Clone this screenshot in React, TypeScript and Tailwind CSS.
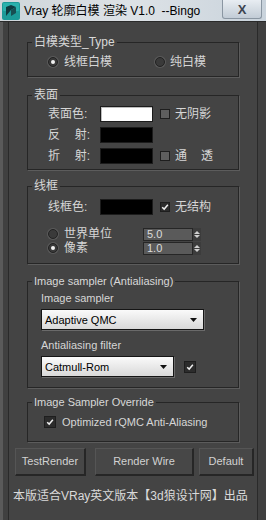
import React from 'react';

function Radio({ checked }: { checked?: boolean }) {
  return (
    <span className="flex h-[10px] w-[10px] shrink-0 items-center justify-center rounded-full border border-[#222] bg-[#3a3a3a] shadow-[0_0_0_1px_#5a5a5a]">
      {checked && <span className="h-[4px] w-[4px] rounded-full bg-[#f2f2f2]" />}
    </span>
  );
}

function Check({ checked, size = 9 }: { checked?: boolean; size?: number }) {
  return (
    <span
      className={`flex shrink-0 items-center justify-center border border-[#1e1e1e] ${
        checked ? 'bg-[#2c2c2c]' : 'bg-[#5e5e5e]'
      } ${size === 9 ? 'h-[10px] w-[10px]' : 'h-[12px] w-[12px]'}`}
    >
      {checked && (
        <svg viewBox="0 0 10 10" className="h-[8px] w-[8px]">
          <path d="M1.5 5.2 L4 7.6 L8.6 2.2" fill="none" stroke="#f0f0f0" strokeWidth="1.8" />
        </svg>
      )}
    </span>
  );
}

function Swatch({ white }: { white?: boolean }) {
  return (
    <span
      className={`block h-[16px] w-[53px] shrink-0 border border-[#1c1c1c] ${
        white ? 'bg-white shadow-[inset_1px_1px_0_#bdbdbd]' : 'bg-black'
      }`}
    />
  );
}

function Spinner({ value }: { value: string }) {
  return (
    <div className="flex h-[13px] w-[58px] items-center">
      <div className="flex h-full flex-1 items-center border border-[#262626] bg-[#5a5a5a] pl-[3px] text-[11px] leading-none text-[#dcdcdc]">
        {value}
      </div>
      <div className="flex h-full w-[8px] flex-col items-center justify-center gap-[1px] bg-[#3c3c3c]">
        <svg viewBox="0 0 6 3" className="h-[3px] w-[6px]"><path d="M0 3 L3 0 L6 3Z" fill="#cfcfcf" /></svg>
        <svg viewBox="0 0 6 3" className="h-[3px] w-[6px]"><path d="M0 0 L3 3 L6 0Z" fill="#cfcfcf" /></svg>
      </div>
    </div>
  );
}

function Dropdown({ label, width }: { label: string; width: string }) {
  return (
    <div
      className={`${width} flex h-[21px] items-center border border-[#151515] bg-gradient-to-b from-[#fafafa] to-[#d9d9d9] pl-[3px] pr-[6px] text-[11px] text-black shadow-[1px_1px_0_#6a6a6a]`}
    >
      <span className="flex-1">{label}</span>
      <svg viewBox="0 0 7 4" className="h-[4px] w-[7px]"><path d="M0 0 L7 0 L3.5 4Z" fill="#111" /></svg>
    </div>
  );
}

function Group({
  title,
  children,
  className = '',
  latin,
}: {
  title: string;
  children: React.ReactNode;
  className?: string;
  latin?: boolean;
}) {
  return (
    <fieldset className={`border border-[#262626] shadow-[1px_1px_0_#5c5c5c] ${className}`}>
      <legend
        className={`ml-[4px] px-[2px] leading-[14px] text-[#d8d8d8] ${latin ? 'text-[11px]' : 'text-[12px]'}`}
      >
        {title}
      </legend>
      {children}
    </fieldset>
  );
}

function Button({ label, width }: { label: string; width: string }) {
  return (
    <div
      className={`${width} flex h-[28px] items-center justify-center border-b-2 border-r-2 border-b-[#262626] border-r-[#262626] border-l border-t border-l-[#555] border-t-[#555] bg-[#474747] text-[11px] text-[#d2d2d2]`}
    >
      {label}
    </div>
  );
}

export default function App() {
  return (
    <div className="relative h-[520px] w-[266px] overflow-hidden bg-[#404040] font-['Liberation_Sans','Noto_Sans_CJK_SC',sans-serif]">
      {/* title bar */}
      <div className="flex h-[22px] items-center border-b border-[#2a2a2a] bg-gradient-to-r from-[#cfd6db] via-[#dde2e6] to-[#c9d3dc]">
        <svg viewBox="0 0 18 18" className="ml-[2px] h-[18px] w-[18px]">
          <rect x="0" y="0" width="18" height="18" rx="2" fill="#1b9a98" />
          <rect x="1" y="1" width="16" height="8" rx="1" fill="#36c1bb" opacity="0.6" />
          <path d="M4 14 L4 5 L9 3 L14 5 L9 8 Z" fill="#0f3b40" />
          <path d="M9 8 L14 5 L14 11 L9 14 Z" fill="#174e52" />
        </svg>
        <span className="ml-[4px] whitespace-nowrap text-[12px] leading-none text-black">
          Vray 轮廓白模 渲染 V1.0&nbsp; --Bingo
        </span>
        <div className="ml-auto mr-[4px] flex h-[19px] w-[40px] self-start items-center justify-center rounded-b-[3px] border border-t-0 border-[#8a96a2] bg-gradient-to-b from-[#e8edf2] to-[#c2ccd6] text-[13px] font-bold leading-none text-[#3c4450]">
          X
        </div>
      </div>

      {/* body */}
      <div className="flex h-[498px] border-l-[3px] border-l-[#5a5a5a] pl-[5px] pr-[5px]">
        <div className="flex w-[250px] flex-col border-x border-[#2a2a2a] bg-[#444444] pb-[4px] pt-[13px] text-[#d6d6d6]">
          <div className="flex flex-col px-[18px]">
            {/* 白模类型 */}
            <Group title="白模类型_Type" className="h-[42px]">
              <div className="mt-[6px] flex h-[14px] items-center text-[12px] leading-[14px]">
                <span className="ml-[20px]"><Radio checked /></span>
                <span className="ml-[6px]">线框白模</span>
                <span className="ml-[43px]"><Radio /></span>
                <span className="ml-[5px]">纯白模</span>
              </div>
            </Group>

            {/* 表面 */}
            <Group title="表面" className="mt-[11px] h-[82px]">
              <div className="mt-[4px] flex flex-col gap-[5px] text-[12px] leading-[16px]">
                <div className="flex h-[16px] items-center">
                  <span className="ml-[20px] w-[52px]">表面色:</span>
                  <Swatch white />
                  <span className="ml-[7px]"><Check /></span>
                  <span className="ml-[5px]">无阴影</span>
                </div>
                <div className="flex h-[16px] items-center">
                  <span className="ml-[20px] flex w-[42px] justify-between"><span>反</span><span>射:</span></span>
                  <span className="ml-[10px]"><Swatch /></span>
                </div>
                <div className="flex h-[16px] items-center">
                  <span className="ml-[20px] flex w-[42px] justify-between"><span>折</span><span>射:</span></span>
                  <span className="ml-[10px]"><Swatch /></span>
                  <span className="ml-[7px]"><Check /></span>
                  <span className="ml-[5px] flex w-[38px] justify-between"><span>通</span><span>透</span></span>
                </div>
              </div>
            </Group>

            {/* 线框 */}
            <Group title="线框" className="mt-[9px] h-[85px]">
              <div className="mt-[6px] flex flex-col text-[12px] leading-[14px]">
                <div className="flex h-[16px] items-center">
                  <span className="ml-[20px] w-[52px]">线框色:</span>
                  <Swatch />
                  <span className="ml-[7px]"><Check checked /></span>
                  <span className="ml-[5px]">无结构</span>
                </div>
                <div className="mt-[12px] flex h-[14px] items-center">
                  <span className="ml-[20px]"><Radio /></span>
                  <span className="ml-[6px] w-[79px]">世界单位</span>
                  <Spinner value="5.0" />
                </div>
                <div className="flex h-[14px] items-center">
                  <span className="ml-[20px]"><Radio checked /></span>
                  <span className="ml-[6px] w-[79px]">像素</span>
                  <Spinner value="1.0" />
                </div>
              </div>
            </Group>

            {/* Image sampler */}
            <Group title="Image sampler (Antialiasing)" latin className="mt-[10px] h-[114px]">
              <div className="mt-[3px] flex flex-col pl-[13px] text-[11px] leading-[14px]">
                <span>Image sampler</span>
                <div className="mt-[4px]"><Dropdown label="Adaptive QMC" width="w-[163px]" /></div>
                <span className="mt-[8px]">Antialiasing filter</span>
                <div className="mt-[4px] flex items-center">
                  <Dropdown label="Catmull-Rom" width="w-[133px]" />
                  <span className="ml-[10px]"><Check checked size={12} /></span>
                </div>
              </div>
            </Group>

            {/* Override */}
            <Group title="Image Sampler Override" latin className="mt-[7px] h-[47px]">
              <div className="mt-[6px] flex items-center pl-[16px] text-[11px] leading-[14px]">
                <Check checked size={12} />
                <span className="ml-[6px]">Optimized rQMC Anti-Aliasing</span>
              </div>
            </Group>
          </div>

          {/* buttons */}
          <div className="mt-[6px] flex pl-[6px]">
            <Button label="TestRender" width="w-[71px]" />
            <div className="ml-[9px]"><Button label="Render Wire" width="w-[99px]" /></div>
            <div className="ml-[5px]"><Button label="Default" width="w-[55px]" /></div>
          </div>

          {/* footer */}
          <div className="mt-[12px] pl-[4px] whitespace-nowrap text-[12px] leading-[16px] text-[#dadada]">
            本版适合VRay英文版本【3d狼设计网】出品
          </div>
        </div>
      </div>
    </div>
  );
}
